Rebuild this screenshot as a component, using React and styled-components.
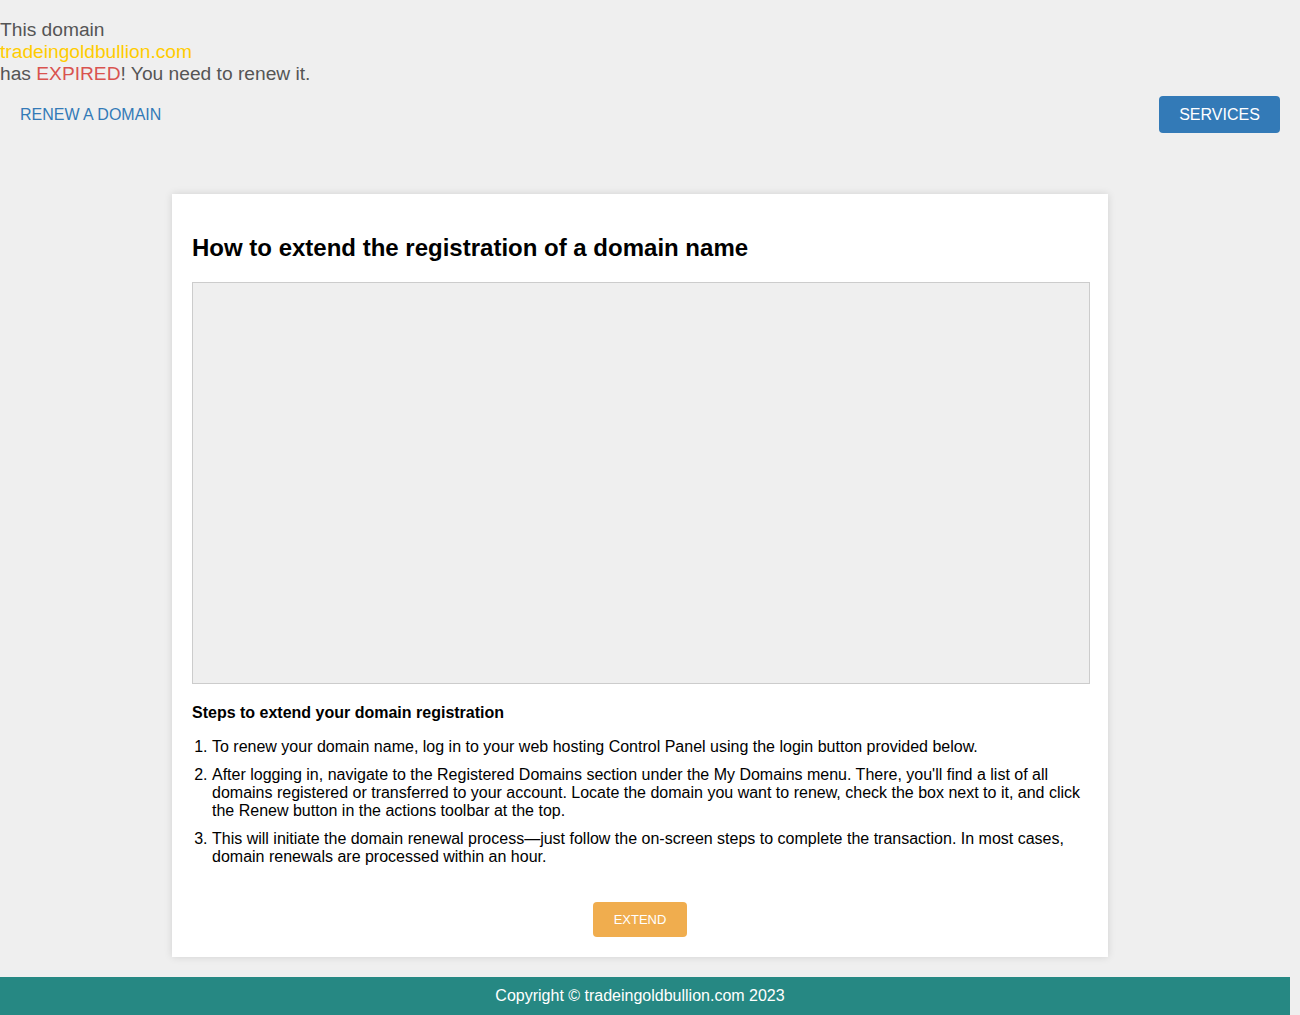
import React from "react";
import styled, { createGlobalStyle } from "styled-components";

const Global = createGlobalStyle`
  html, body { margin: 0; padding: 0; background: #efefef; }
  body { font-family: "Liberation Sans", Arial, sans-serif; }
  * { box-sizing: border-box; }
`;

const Page = styled.div`
  width: 1300px;
  min-height: 1015px;
  display: flex;
  flex-direction: column;
`;

const Notice = styled.div`
  padding-top: 19px;
  font-size: 19.2px;
  line-height: 22px;
  color: #555555;
`;

const Domain = styled.div`
  color: #ffcc00;
`;

const Expired = styled.span`
  color: #d9534f;
`;

const Nav = styled.div`
  display: flex;
  justify-content: space-between;
  align-items: center;
  padding: 11px 20px 0 20px;
  height: 48px;
`;

const NavLink = styled.a`
  color: #337ab7;
  font-size: 16px;
  text-decoration: none;
`;

const NavButton = styled.a`
  display: flex;
  align-items: center;
  justify-content: center;
  width: 121px;
  height: 37px;
  border-radius: 4px;
  background: #337ab7;
  color: #ffffff;
  font-size: 16px;
  text-decoration: none;
`;

const Card = styled.div`
  margin: 61px 0 20px 172px;
  width: 936px;
  background: #ffffff;
  padding: 20px;
  box-shadow: 0 0 8px rgba(0, 0, 0, 0.12);
`;

const Title = styled.h2`
  margin: 21px 0 21px 0;
  font-size: 24px;
  line-height: 26px;
  font-weight: bold;
  color: #000;
`;

const VideoBox = styled.div`
  height: 402px;
  margin-right: -2px;
  border: 1px solid #cccccc;
  background: #efefef;
`;

const StepsTitle = styled.div`
  margin-top: 20px;
  font-size: 16px;
  line-height: 18px;
  font-weight: bold;
  color: #000;
`;

const Steps = styled.ol`
  margin: 16px 0 0 0;
  padding-left: 20px;
  font-size: 16px;
  line-height: 18px;
  color: #000;
`;

const Step = styled.li`
  & + & { margin-top: 10px; }
`;

const ButtonRow = styled.div`
  display: flex;
  justify-content: center;
  margin-top: 36px;
`;

const ExtendButton = styled.a`
  display: flex;
  align-items: center;
  justify-content: center;
  width: 94px;
  height: 35px;
  border-radius: 4px;
  background: #f0ad4e;
  color: #ffffff;
  font-size: 13px;
  text-decoration: none;
`;

const Footer = styled.div`
  width: 1290px;
  height: 38px;
  background: #268883;
  color: #ffffff;
  font-size: 16px;
  display: flex;
  align-items: center;
  justify-content: center;
  padding-right: 10px;
`;

export default function App() {
  return (
    <Page>
      <Global />
      <Notice>
        <div>This domain</div>
        <Domain>tradeingoldbullion.com</Domain>
        <div>
          has <Expired>EXPIRED</Expired>! You need to renew it.
        </div>
      </Notice>
      <Nav>
        <NavLink href="#">RENEW A DOMAIN</NavLink>
        <NavButton href="#">SERVICES</NavButton>
      </Nav>
      <Card>
        <Title>How to extend the registration of a domain name</Title>
        <VideoBox />
        <StepsTitle>Steps to extend your domain registration</StepsTitle>
        <Steps>
          <Step>
            To renew your domain name, log in to your web hosting Control Panel using the login button provided below.
          </Step>
          <Step>
            After logging in, navigate to the Registered Domains section under the My Domains menu. There, you'll find a list of all domains registered or transferred to your account. Locate the domain you want to renew, check the box next to it, and click the Renew button in the actions toolbar at the top.
          </Step>
          <Step>
            This will initiate the domain renewal process—just follow the on-screen steps to complete the transaction. In most cases, domain renewals are processed within an hour.
          </Step>
        </Steps>
        <ButtonRow>
          <ExtendButton href="#">EXTEND</ExtendButton>
        </ButtonRow>
      </Card>
      <Footer>Copyright © tradeingoldbullion.com 2023</Footer>
    </Page>
  );
}
